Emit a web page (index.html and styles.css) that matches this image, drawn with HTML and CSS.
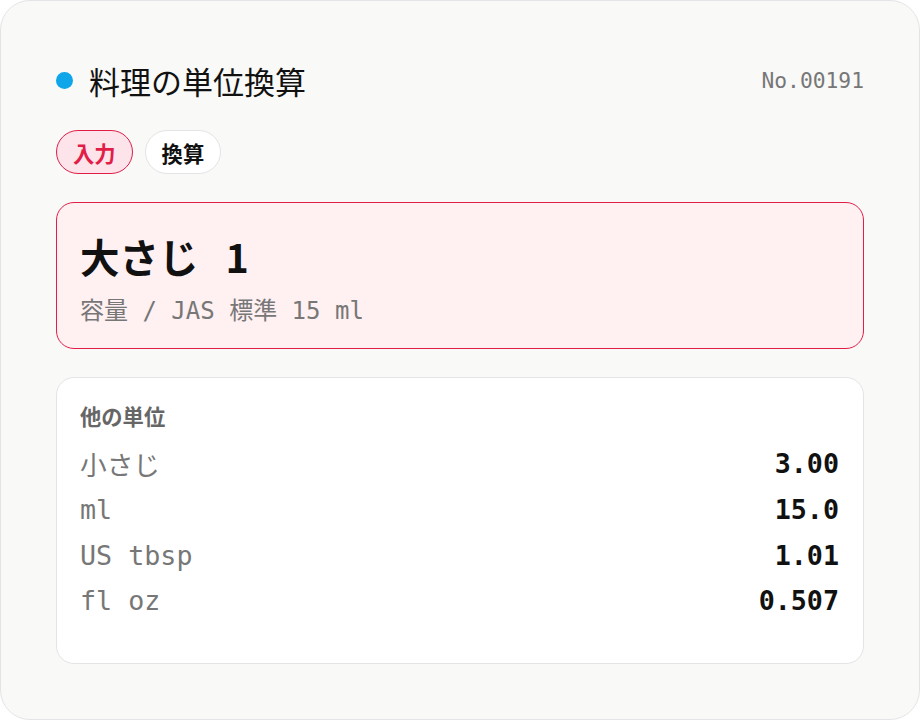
FILE: index.html
```html
<!DOCTYPE html>
<html lang="ja">
<head>
<meta charset="utf-8">
<link rel="stylesheet" href="styles.css">
</head>
<body>
<div class="card">
  <div class="head">
    <div class="title"><span class="dot"></span><span>料理の単位換算</span></div>
    <div class="no">No.00191</div>
  </div>
  <div class="tags">
    <span class="tag tag-active">入力</span>
    <span class="tag">換算</span>
  </div>
  <div class="input">
    <div class="big"><span>大さじ</span><span class="num">1</span></div>
    <div class="sub">容量 / JAS 標準 15 ml</div>
  </div>
  <div class="others">
    <div class="label">他の単位</div>
    <div class="rows">
      <div class="row"><span class="k">小さじ</span><span class="v">3.00</span></div>
      <div class="row"><span class="k">ml</span><span class="v">15.0</span></div>
      <div class="row"><span class="k">US tbsp</span><span class="v">1.01</span></div>
      <div class="row"><span class="k">fl oz</span><span class="v">0.507</span></div>
    </div>
  </div>
</div>
</body>
</html>
```

FILE: styles.css
```css
html, body {
  margin: 0;
  padding: 0;
  background: #ffffff;
}
body {
  font-family: "Inter", "Noto Sans CJK JP", sans-serif;
  color: #111;
}
.card {
  box-sizing: border-box;
  width: 920px;
  height: 720px;
  background: #f9f9f8;
  border: 1px solid #e4e4e7;
  border-radius: 30px;
  padding: 55px 55px 0 55px;
  display: flex;
  flex-direction: column;
}
.head {
  display: flex;
  align-items: center;
  justify-content: space-between;
  height: 48px;
}
.title {
  display: flex;
  align-items: center;
  gap: 16px;
  font-family: "Noto Sans CJK JP", sans-serif;
  font-size: 31px;
  font-weight: 400;
  color: #111;
}
.dot {
  width: 17px;
  height: 17px;
  border-radius: 50%;
  background: #0ea5e9;
}
.no {
  font-family: "DejaVu Sans Mono", monospace;
  font-size: 21.3px;
  color: #777;
}
.tags {
  display: flex;
  gap: 12px;
  margin-top: 26px;
}
.tag {
  box-sizing: border-box;
  height: 44px;
  padding: 0 16px;
  display: flex;
  align-items: center;
  border-radius: 22px;
  border: 1px solid #e4e4e7;
  background: #fff;
  font-family: "Noto Sans CJK JP", sans-serif;
  font-weight: 700;
  font-size: 21.3px;
  color: #111;
}
.tag-active {
  background: #fce4ea;
  border-color: #e11d48;
  color: #e11d48;
}
.input {
  margin-top: 28px;
  box-sizing: border-box;
  height: 147px;
  background: #fff0f1;
  border: 1px solid #e11d48;
  border-radius: 18px;
  padding: 23px 23px 0 23px;
}
.big {
  display: flex;
  gap: 27px;
  font-family: "Noto Sans CJK JP", sans-serif;
  font-weight: 700;
  font-size: 39.5px;
  line-height: 60px;
  height: 60px;
  color: #111;
}
.sub {
  margin-top: 9px;
  font-family: "DejaVu Sans Mono", "Noto Sans CJK JP", monospace;
  font-size: 24px;
  line-height: 32px;
  color: #777;
}
.others {
  margin-top: 28px;
  box-sizing: border-box;
  height: 287px;
  background: #fff;
  border: 1px solid #e4e4e7;
  border-radius: 18px;
  padding: 22px 24px 0 23px;
}
.label {
  font-family: "Noto Sans CJK JP", sans-serif;
  font-weight: 700;
  font-size: 21.3px;
  line-height: 32px;
  color: #666;
}
.rows {
  margin-top: 9px;
}
.row {
  display: flex;
  justify-content: space-between;
  align-items: center;
  height: 45.7px;
  font-family: "DejaVu Sans Mono", "Noto Sans CJK JP", monospace;
  font-size: 26.7px;
}
.k {
  color: #777;
}
.v {
  font-weight: 700;
  color: #111;
}
```
